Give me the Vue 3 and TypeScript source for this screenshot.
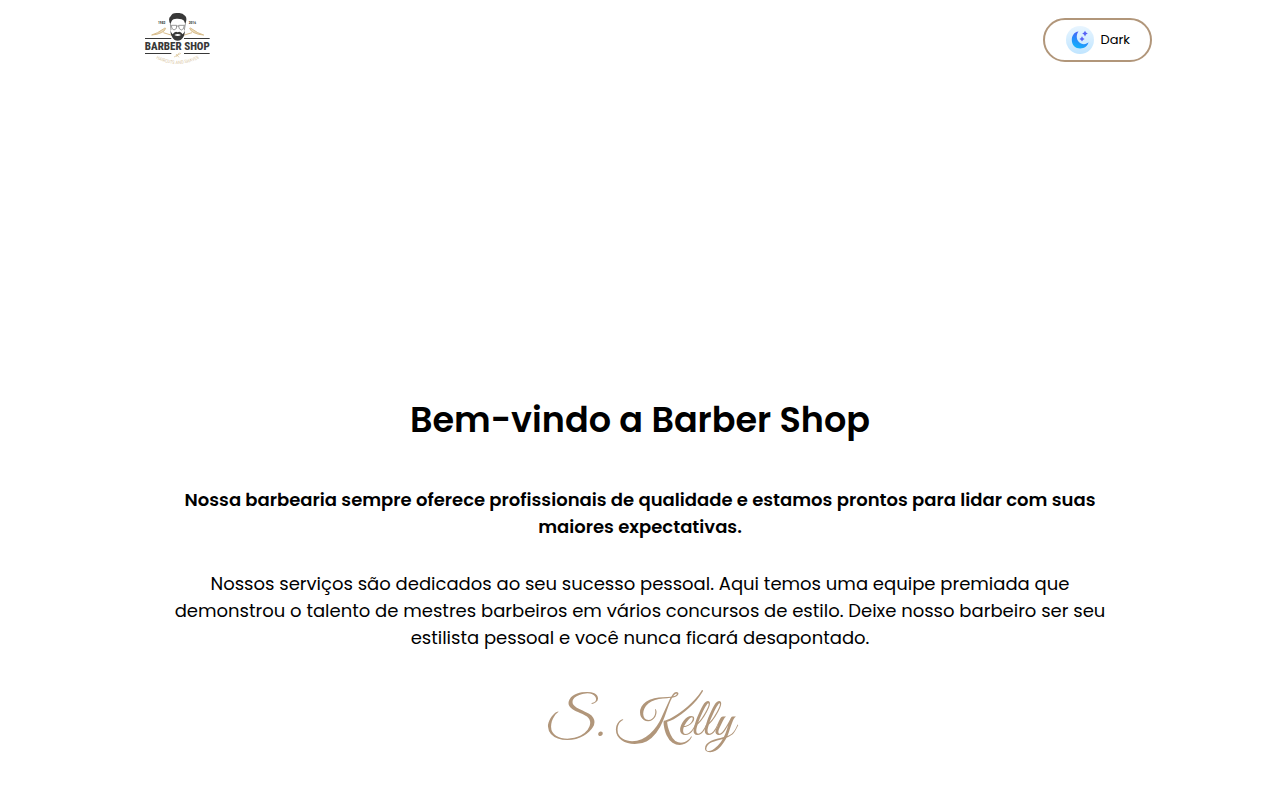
<script setup lang="ts">
import { ref } from 'vue'

const dark = ref<boolean>(false)
const toggle = (): void => {
  dark.value = !dark.value
}
</script>

<template>
  <div class="page" :class="{ 'page--dark': dark }">
    <header class="bar">
      <a class="brand" href="#" aria-label="Barber Shop">
        <svg class="logo" viewBox="-24 -12 288 240" aria-hidden="true">
          <g class="tan-line">
            <path d="M47 93 Q65 88 82 75 Q88 70 89 73 Q86 82 76 86 Q64 92 47 93" />
            <path d="M82 86 L108 94" />
            <path d="M203 93 Q185 88 168 75 Q162 70 161 73 Q164 82 174 86 Q186 92 203 93" />
            <path d="M168 86 L142 94" />
          </g>
          <path class="scissors" d="M114 159 L135 148 M120 150 L129 160 M121 158 L130 146" />
          <g class="ink">
            <path d="M103 61 Q95 43 104 37 Q108 25 126 27 Q139 25 147 35 Q155 41 148 61 L144 50 Q139 44 125 44 Q111 43 107 51 Z" />
            <path d="M103 76 Q104 87 110 91 Q117 80 125 85 Q133 80 140 91 Q147 85 147 76 Q147 99 135 107 Q125 113 115 107 Q103 98 103 76 Z" />
            <path d="M27 102 H106 V105 H27 Z M144 102 H221 V105 H144 Z" />
            <path d="M27 147 H106 V150 H27 Z M144 147 H221 V150 H144 Z" />
          </g>
          <path class="lip" d="M115 93 Q125 87 135 93 Q125 99 115 93 Z" />
          <g class="ink-line">
            <path d="M106 64 H122 Q124 76 114 78 Q106 76 106 64 Z" />
            <path d="M128 64 H145 Q144 77 136 78 Q127 76 128 64 Z" />
            <path d="M122 67 Q125 65 128 67 M103 60 L105 78 M148 60 L145 78" />
          </g>
          <text class="year" x="77" y="60">1982</text>
          <text class="year" x="169" y="60">2016</text>
          <text class="name" x="124" y="138">BARBER SHOP</text>
          <path id="logo-arc" class="arc" d="M62 164 Q124 196 188 164" />
          <text class="motto"><textPath href="#logo-arc" startOffset="50%">HAIRCUTS AND SHAVES</textPath></text>
        </svg>
      </a>
      <button class="theme" type="button" @click="toggle">
        <svg class="moon" viewBox="0 0 30 30" aria-hidden="true">
          <defs>
            <linearGradient id="disc" x1="0" y1="0" x2="0" y2="1">
              <stop offset="0" stop-color="#e8f5ff" />
              <stop offset="1" stop-color="#c0e5ff" />
            </linearGradient>
            <linearGradient id="crescent" x1="0.7" y1="0" x2="0.3" y2="1">
              <stop offset="0" stop-color="#5a55f5" />
              <stop offset="0.5" stop-color="#2787fb" />
              <stop offset="1" stop-color="#12b5fb" />
            </linearGradient>
          </defs>
          <circle cx="15" cy="15" r="14" fill="url(#disc)" />
          <path fill="url(#crescent)" d="M13.5 6.6 C9 7.2 6.8 11 6.8 15 C6.8 20 10.5 23.5 15.2 23.5 C19.6 23.5 22.8 20.9 23.5 17.3 C21.8 19.1 18.8 19.8 16 18.5 C11.6 16.6 10.4 10.7 13.5 6.6 Z" />
          <path fill="#5862f5" d="M20 5.8 Q20.6 7.8 22.8 8.5 Q20.6 9.2 20 11.4 Q19.4 9.2 17.2 8.5 Q19.4 7.8 20 5.8 Z M17 11.2 Q17.6 13.2 19.6 13.9 Q17.6 14.6 17 16.6 Q16.4 14.6 14.4 13.9 Q16.4 13.2 17 11.2 Z" />
        </svg>
        <span>{{ dark ? 'Light' : 'Dark' }}</span>
      </button>
    </header>

    <main class="welcome">
      <h1>Bem-vindo a Barber Shop</h1>
      <p class="lead">
        Nossa barbearia sempre oferece profissionais de qualidade e estamos prontos para lidar com suas
        maiores expectativas.
      </p>
      <p class="copy">
        Nossos serviços são dedicados ao seu sucesso pessoal. Aqui temos uma equipe premiada que
        demonstrou o talento de mestres barbeiros em vários concursos de estilo. Deixe nosso barbeiro ser seu
        estilista pessoal e você nunca ficará desapontado.
      </p>
      <p class="signature">S. Kelly</p>
    </main>
  </div>
</template>

<style>
body {
  margin: 0;
}
</style>

<style scoped>
.page {
  min-height: 100vh;
  box-sizing: border-box;
  background: #fff;
  color: #000;
  font-family: Poppins, Inter, 'Open Sans', sans-serif;
}
.page--dark {
  background: #16161a;
  color: #fff;
}
.bar {
  display: flex;
  align-items: center;
  justify-content: space-between;
  height: 80px;
  padding: 0 10%;
}
.brand,
.logo {
  display: block;
}
.logo {
  width: 96px;
  height: 80px;
}
.ink,
.year,
.name {
  fill: #383838;
}
.page--dark .ink,
.page--dark .year,
.page--dark .name {
  fill: #eee;
}
.ink-line {
  fill: none;
  stroke: #666;
  stroke-width: 2;
}
.tan-line {
  fill: #ecdcbd;
  stroke: #d8bd8c;
  stroke-width: 3;
}
.scissors {
  fill: none;
  stroke: #d8c08f;
  stroke-width: 2;
}
.lip {
  fill: #fff;
}
.arc {
  fill: none;
}
.year,
.name,
.motto {
  font-family: 'Roboto Condensed', 'Barlow Condensed', Oswald, 'Liberation Sans', sans-serif;
  text-anchor: middle;
}
.year {
  font-size: 11px;
  font-weight: 700;
}
.name {
  font-size: 33px;
  font-weight: 800;
}
.motto {
  font-size: 14px;
  fill: #dccba9;
}
.theme {
  display: flex;
  align-items: center;
  gap: 5px;
  padding: 5px 20px;
  border: 2px solid #b1967a;
  border-radius: 30px;
  background: transparent;
  color: inherit;
  font-family: inherit;
  font-size: 13px;
  cursor: pointer;
}
.moon {
  width: 30px;
  height: 30px;
}
.welcome {
  max-width: 960px;
  margin: 0 auto;
  padding: 313px 10px 40px;
  text-align: center;
}
h1 {
  margin: 0;
  font-size: 35px;
  font-weight: 600;
  line-height: 53px;
}
.lead,
.copy {
  margin: 40px 0 0;
  font-size: 18px;
  line-height: 27px;
}
.lead {
  font-weight: 600;
}
.copy {
  margin-top: 30px;
}
.signature {
  margin: 32px 0 0;
  color: #b1967a;
  font-family: 'Great Vibes', 'Liberation Serif', cursive;
  font-size: 53px;
  line-height: 80px;
}
</style>
